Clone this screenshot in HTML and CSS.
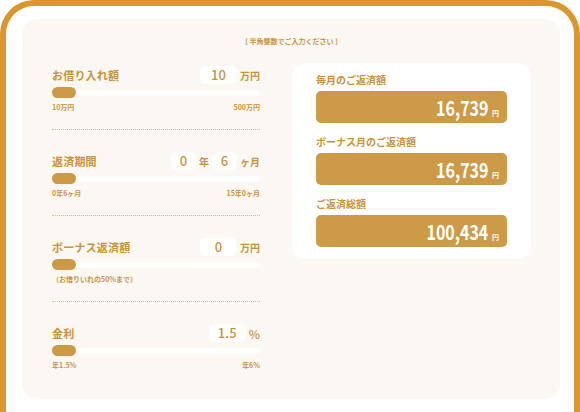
FILE: index.html
```html
<!DOCTYPE html>
<html lang="ja">
<head>
<meta charset="utf-8">
<link rel="stylesheet" href="styles.css">
</head>
<body>
<div class="frame">
  <div class="panel">
    <p class="note-top">[ 半角整数でご入力ください ]</p>
    <div class="cols">
      <div class="inputs">
        <section class="field first">
          <div class="head">
            <span class="label">お借り入れ額</span>
            <span class="vals"><span class="box">10</span><span class="unit">万円</span></span>
          </div>
          <div class="slider"><span class="knob"></span></div>
          <div class="scale"><span>10万円</span><span>500万円</span></div>
        </section>
        <section class="field">
          <div class="head">
            <span class="label">返済期間</span>
            <span class="vals"><span class="box sm">0</span><span class="unit mid">年</span><span class="box sm">6</span><span class="unit">ヶ月</span></span>
          </div>
          <div class="slider"><span class="knob"></span></div>
          <div class="scale"><span>0年6ヶ月</span><span>15年0ヶ月</span></div>
        </section>
        <section class="field">
          <div class="head">
            <span class="label">ボーナス返済額</span>
            <span class="vals"><span class="box">0</span><span class="unit">万円</span></span>
          </div>
          <div class="slider"><span class="knob"></span></div>
          <div class="scale"><span class="hint">（お借りいれの50%まで）</span></div>
        </section>
        <section class="field last">
          <div class="head">
            <span class="label">金利</span>
            <span class="vals"><span class="box">1.5</span><span class="unit pct">%</span></span>
          </div>
          <div class="slider"><span class="knob"></span></div>
          <div class="scale"><span>年1.5%</span><span>年6%</span></div>
        </section>
      </div>
      <div class="result">
        <div class="r-label">毎月のご返済額</div>
        <div class="r-box"><span class="num">16,739</span><span class="yen">円</span></div>
        <div class="r-label">ボーナス月のご返済額</div>
        <div class="r-box"><span class="num">16,739</span><span class="yen">円</span></div>
        <div class="r-label">ご返済総額</div>
        <div class="r-box"><span class="num">100,434</span><span class="yen">円</span></div>
      </div>
    </div>
  </div>
</div>
</body>
</html>
```
FILE: styles.css
```css
* { box-sizing: border-box; }
html, body { margin: 0; padding: 0; background: #ffffff; }
body {
  width: 580px;
  height: 412px;
  overflow: hidden;
  font-family: "Noto Sans CJK JP", "Noto Sans", sans-serif;
  color: #c8923c;
}
.frame {
  width: 580px;
  height: 412px;
  border: 6px solid #d9972e;
  border-bottom: 0;
  border-radius: 34px 34px 0 0;
  padding: 13px 14px 0 16px;
  background: #ffffff;
}
.panel {
  background: #fbf8f3;
  border-radius: 16px;
  height: 380px;
  padding: 18px 29px 0 30px;
}
.note-top {
  margin: 0;
  text-align: center;
  font-size: 7px;
  line-height: 8px;
  font-weight: 700;
  color: #c8923c;
}
.cols {
  display: grid;
  grid-template-columns: 208px 239px;
  column-gap: 32px;
  margin-top: 18px;
  align-items: start;
}
.inputs { padding-top: 3px; }
.field {
  padding: 22px 0 17px;
  border-bottom: 1px dotted #e0bb80;
}
.field.first { padding-top: 0; }
.field.last { border-bottom: none; padding-bottom: 0; }
.head {
  display: flex;
  justify-content: space-between;
  align-items: center;
  height: 18px;
}
.label {
  font-size: 11px;
  font-weight: 700;
  letter-spacing: 0.2px;
}
.vals { display: flex; align-items: center; }
.box {
  width: 37px;
  height: 18px;
  background: #ffffff;
  border-radius: 6px;
  text-align: center;
  font-size: 13px;
  line-height: 18px;
  font-weight: 500;
}
.box.sm { width: 25px; }
.unit {
  margin-left: 3px;
  font-size: 10px;
  font-weight: 700;
}
.unit.mid { margin: 0 3px 0 3px; }
.unit.pct { font-size: 12px; font-weight: 500; margin-left: 3px; }
.slider {
  position: relative;
  margin-top: 3px;
  height: 11px;
  display: flex;
  align-items: center;
}
.slider::before {
  content: "";
  display: block;
  width: 100%;
  height: 6px;
  background: #ffffff;
  border-radius: 3px;
}
.knob {
  position: absolute;
  left: 0;
  top: 0;
  width: 24px;
  height: 11px;
  border-radius: 6px;
  background: #cc9a46;
}
.scale {
  display: flex;
  justify-content: space-between;
  margin-top: 4px;
  font-size: 7px;
  line-height: 10px;
  font-weight: 700;
}
.result {
  background: #ffffff;
  border-radius: 14px;
  padding: 10px 24px 12px;
}
.r-label {
  font-size: 10px;
  line-height: 14px;
  font-weight: 700;
  margin-top: 12px;
}
.r-label:first-child { margin-top: 0; }
.r-box {
  margin-top: 4px;
  height: 32px;
  background: #cd9b47;
  border-radius: 5px;
  display: flex;
  justify-content: flex-end;
  align-items: baseline;
  padding: 0 8px 0 0;
  color: #ffffff;
  line-height: 32px;
}
.num {
  display: inline-block;
  font-size: 20px;
  font-weight: 700;
  transform: scaleX(0.8);
  transform-origin: right center;
  position: relative;
  top: 1px;
}
.yen {
  font-size: 7px;
  font-weight: 700;
  margin-left: 4px;
  position: relative;
  top: 1px;
}
```
